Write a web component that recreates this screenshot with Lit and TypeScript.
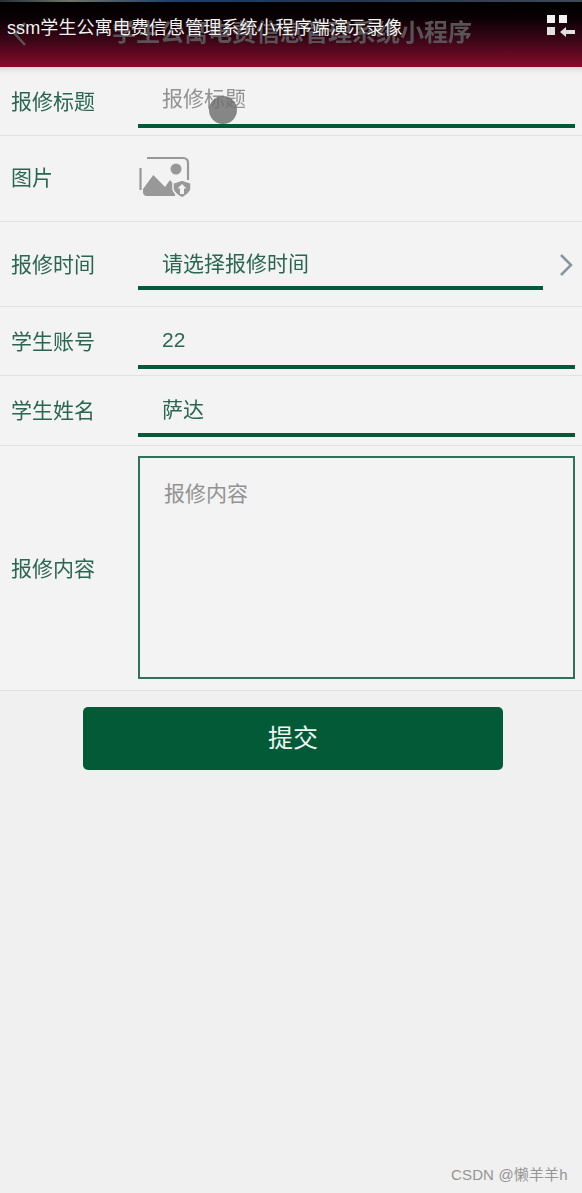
import { LitElement, html, css } from 'lit';
import { customElement } from 'lit/decorators.js';

@customElement('app-root')
export class AppRoot extends LitElement {
  static styles = css`
    :host {
      display: block;
      width: 582px;
      height: 1193px;
      overflow: hidden;
      position: relative;
      background: #f0f0f0;
      font-family: 'Liberation Sans', 'Noto Sans CJK SC', sans-serif;
    }
    .strip {
      height: 2px;
      background: linear-gradient(90deg, #26303c 0%, #6d7466 12%, #1b3f6b 30%, #23364f 60%, #3c4a55 100%);
    }
    .header {
      height: 65px;
      position: relative;
      overflow: hidden;
      background: linear-gradient(180deg, #000 0%, #070003 22%, #3a0617 58%, #6a0a22 85%, #8a0c2a 100%);
    }
    .page-title {
      position: absolute;
      left: 112px;
      top: 16px;
      font-size: 24px;
      line-height: 30px;
      font-weight: 700;
      white-space: nowrap;
      color: #5a5356;
      filter: blur(0.7px);
    }
    .back {
      position: absolute;
      left: 12px;
      top: 18px;
    }
    .video-title {
      position: absolute;
      left: 7px;
      top: 14px;
      font-size: 18px;
      line-height: 24px;
      letter-spacing: 0.1px;
      white-space: nowrap;
      color: #f4f4f4;
      text-shadow: 0 0 1px #000;
    }
    .video-icon {
      position: absolute;
      left: 546px;
      top: 12px;
    }
    .form {
      background: #f3f3f3;
      box-shadow: inset 0 8px 8px -8px rgba(0, 0, 0, 0.22);
    }
    .row {
      display: flex;
      align-items: center;
      box-sizing: border-box;
      border-bottom: 1px solid #e2e2e2;
      padding: 0 7px 0 11px;
    }
    .label {
      width: 127px;
      flex: none;
      margin-top: -3px;
      font-size: 21px;
      color: #2a6650;
      filter: blur(0.3px);
    }
    .field {
      flex: 1;
      align-self: stretch;
      display: flex;
      flex-direction: column;
    }
    .value {
      flex: 1;
      display: flex;
      align-items: center;
      padding-left: 24px;
      font-size: 21px;
      color: #2a6650;
    }
    .value span.text {
      filter: blur(0.3px);
    }
    .value.placeholder {
      color: #929292;
    }
    .line {
      height: 4px;
      background: #03593a;
      flex: none;
    }
    .title-row {
      height: 69px;
    }
    .title-row .field {
      padding-bottom: 7px;
    }
    .title-row .value {
      padding-top: 3px;
      position: relative;
    }
    .touch {
      position: absolute;
      left: 71px;
      top: 29px;
      width: 28px;
      height: 28px;
      border-radius: 50%;
      background: rgba(110, 110, 110, 0.82);
    }
    .image-row {
      height: 86px;
    }
    .image-row .label {
      margin-top: -5px;
    }
    .image-row svg {
      display: block;
      margin: -3px 0 0 1px;
    }
    .time-row {
      height: 85px;
    }
    .time-row .field {
      padding-bottom: 16px;
      padding-top: 19px;
    }
    .time-row .value {
      padding-bottom: 3px;
    }
    .time-row .line {
      margin-right: 32px;
    }
    .time-row .chevron {
      position: absolute;
      left: 559px;
      top: 253px;
    }
    .short-row {
      height: 69px;
    }
    .short-row .field {
      padding-bottom: 6px;
    }
    .short-row .value {
      padding-top: 7px;
    }
    .name-row {
      height: 70px;
    }
    .name-row .field {
      padding-bottom: 8px;
    }
    .name-row .value {
      padding-top: 7px;
    }
    .content-row {
      height: 245px;
    }
    .area {
      flex: 1;
      box-sizing: border-box;
      height: 223px;
      margin-bottom: 1px;
      border: 2px solid #2f7159;
      padding: 24px 24px;
      font-size: 21px;
      line-height: 24px;
      color: #929292;
    }
    .actions {
      display: flex;
      justify-content: flex-start;
      padding: 16px 0 0 83px;
    }
    .submit {
      width: 420px;
      height: 63px;
      padding: 0 0 5px;
      border: none;
      border-radius: 5px;
      background: #035a36;
      color: #eef6f1;
      font-family: 'Liberation Serif', 'Noto Sans CJK SC', sans-serif;
      font-size: 25px;
    }
    .mark {
      position: absolute;
      left: 451px;
      top: 1166px;
      font-size: 15px;
      line-height: 18px;
      letter-spacing: 0.15px;
      color: #959595;
    }
  `;

  render() {
    return html`
      <div class="strip"></div>
      <div class="header">
        <svg class="back" width="16" height="28" viewBox="0 0 16 28">
          <path d="M13 3 L3 14 L13 25" fill="none" stroke="#5a5356" stroke-width="2.5" />
        </svg>
        <div class="page-title">学生公寓电费信息管理系统小程序</div>
        <div class="video-title">ssm学生公寓电费信息管理系统小程序端演示录像</div>
        <svg class="video-icon" width="30" height="24" viewBox="0 0 30 24">
          <rect x="1" y="1" width="8" height="8" fill="#f2f2f2" />
          <rect x="13" y="1" width="8" height="8" fill="#f2f2f2" />
          <rect x="1" y="13" width="8" height="8" fill="#e0e0e0" />
          <path d="M14 18 L20 13 V16 H29 V20 H20 V23 Z" fill="#e0e0e0" />
        </svg>
      </div>
      <div class="form">
        <div class="row title-row">
          <div class="label">报修标题</div>
          <div class="field">
            <div class="value placeholder"><span class="text">报修标题</span><span class="touch"></span></div>
            <div class="line"></div>
          </div>
        </div>
        <div class="row image-row">
          <div class="label">图片</div>
          <svg width="53" height="42" viewBox="0 0 53 42">
            <path d="M1.5 12 V34 M8 2 H44 Q49 2 49 7 V24" fill="none" stroke="#989898" stroke-width="2.2" />
            <path d="M4 33 L14.3 19 L26 31 L31 24 L37 31 L36 40 H8 Q4 40 4 36 Z" fill="#989898" />
            <circle cx="37" cy="13" r="5.5" fill="#989898" />
            <path d="M43 24 L52 27 V33 Q51 38 43 42 Q35 38 34 33 V27 Z" fill="#989898" stroke="#f3f3f3" stroke-width="1.5" />
            <path d="M43 28 L47.5 32.5 H45 V38 H41 V32.5 H38.5 Z" fill="#f3f3f3" />
          </svg>
        </div>
        <div class="row time-row">
          <div class="label">报修时间</div>
          <div class="field">
            <div class="value"><span class="text">请选择报修时间</span></div>
            <div class="line"></div>
          </div>
          <svg class="chevron" width="16" height="24" viewBox="0 0 16 24">
            <path d="M2 2 L12 12 L2 22" fill="none" stroke="#8a949c" stroke-width="2.5" />
          </svg>
        </div>
        <div class="row short-row">
          <div class="label">学生账号</div>
          <div class="field">
            <div class="value"><span class="text">22</span></div>
            <div class="line"></div>
          </div>
        </div>
        <div class="row name-row">
          <div class="label">学生姓名</div>
          <div class="field">
            <div class="value"><span class="text">萨达</span></div>
            <div class="line"></div>
          </div>
        </div>
        <div class="row content-row">
          <div class="label">报修内容</div>
          <div class="area">报修内容</div>
        </div>
      </div>
      <div class="actions">
        <button class="submit">提交</button>
      </div>
      <div class="mark">CSDN @懒羊羊h</div>
    `;
  }
}
